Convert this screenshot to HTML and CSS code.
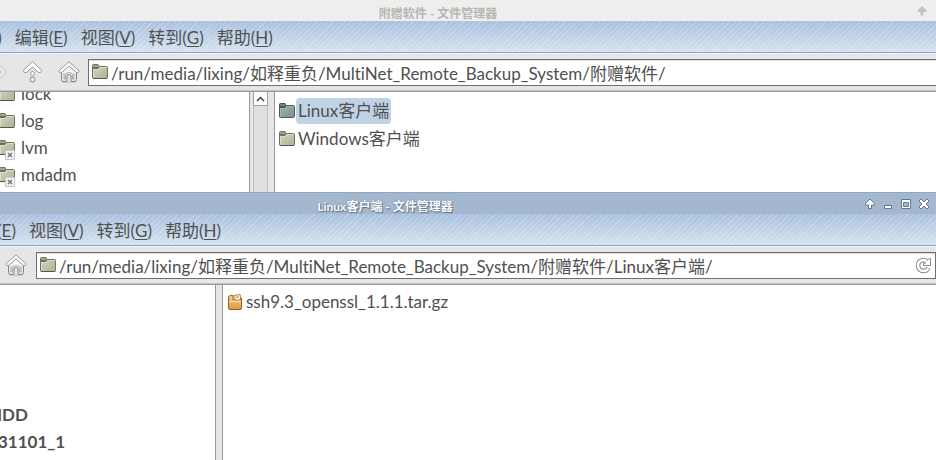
FILE: index.html
```html
<!DOCTYPE html>
<html lang="zh-CN">
<head>
<meta charset="utf-8">
<title>文件管理器</title>
<link rel="stylesheet" href="styles.css">
</head>
<body>
<svg class="defs" aria-hidden="true">
  <defs>
    <linearGradient id="olive" x1="0" y1="0" x2="1" y2="1"><stop offset="0" stop-color="#d3d5c0"/><stop offset="1" stop-color="#adb096"/></linearGradient>
    <linearGradient id="teal" x1="0" y1="0" x2="1" y2="1"><stop offset="0" stop-color="#a0b2b0"/><stop offset="1" stop-color="#7b918f"/></linearGradient>
    <linearGradient id="amber" x1="0" y1="0" x2="0" y2="1"><stop offset="0" stop-color="#f0cf94"/><stop offset="1" stop-color="#d99a42"/></linearGradient>
    <linearGradient id="silver" x1="0" y1="0" x2="0" y2="1"><stop offset="0" stop-color="#ffffff"/><stop offset="1" stop-color="#e2e2e2"/></linearGradient>
    <symbol id="folder" viewBox="0 0 16 16">
      <path d="M.5 13.500V1.500Q.5.500 1.500.5H6L7.500 3.500H.5" fill="#a0a48c" stroke="#6e7258"/>
      <path d="M.5 4.500H6L7.500 2.500H14.500Q15.500 2.500 15.500 3.500V13.500Q15.500 14.500 14.500 14.500H1.500Q.5 14.500.5 13.500Z" fill="url(#olive)" stroke="#6e7258"/>
      <path d="M1.500 13.500V5.500H6.500L8 3.500H14.500" fill="none" stroke="#dcdecb"/>
      <path d="M1 14.500H15" stroke="#55583f"/>
    </symbol>
    <symbol id="folder-teal" viewBox="0 0 16 16">
      <path d="M.5 13.500V1.500Q.5.500 1.500.5H6L7.500 3.500H.5" fill="#6d8482" stroke="#435653"/>
      <path d="M.5 4.500H6L7.500 2.500H14.500Q15.500 2.500 15.500 3.500V13.500Q15.500 14.500 14.500 14.500H1.500Q.5 14.500.5 13.500Z" fill="url(#teal)" stroke="#4a5c59"/>
      <path d="M1.500 13.500V5.500H6.500L8 3.500H14.500" fill="none" stroke="#a2b6b4"/>
    </symbol>
    <symbol id="home" viewBox="0 0 22 22">
      <path d="M3.500 11V18.500Q3.500 20.500 5 20.500H9V15Q9 13.500 11 13.500T13 15V20.500H17Q18.500 20.500 18.500 18.500V11L11 5Z" fill="url(#silver)" stroke="#858585"/>
      <path d="M6 12V18H7.500V14Q8 11.500 11 11.500T14.500 14V18H16V12" fill="none" stroke="#aaa"/>
      <path d="M11 .8L21.200 10Q20.500 12.500 18.500 11.500L11 5L3.500 11.500Q1.500 12.500.8 10Z" fill="#fff" stroke="#979797"/>
      <path d="M4.500 21.500H17.500" stroke="#ccc"/>
    </symbol>
    <symbol id="up" viewBox="0 0 22 22">
      <path d="M10.500.8L19.800 9.500Q19 12.500 16.500 11.500L10.500 6L4.500 11.500Q2 12.500 1.200 9.500Z" fill="#fff" stroke="#979797"/>
      <circle cx="10.500" cy="12.500" r="2" fill="#fff" stroke="#999"/>
      <circle cx="10.500" cy="18.500" r="2.500" fill="#eee" stroke="#858585"/>
    </symbol>
    <symbol id="arrow" viewBox="0 0 12 12">
      <path d="M6 1L10.500 5.500V7H7.500V10.500H4.500V7H1.500V5.500Z"/>
    </symbol>
  </defs>
</svg>

<main class="desktop">
  <section class="window">
    <header class="titlebar idle">
      <h2 class="title">附赠软件 - 文件管理器</h2>
      <div class="controls">
        <button aria-label="卷起"><svg width="12" height="12"><use href="#arrow"/></svg></button>
      </div>
    </header>
    <nav class="menubar">
      <button>文件(<u>F</u>)</button>
      <button>编辑(<u>E</u>)</button>
      <button>视图(<u>V</u>)</button>
      <button>转到(<u>G</u>)</button>
      <button>帮助(<u>H</u>)</button>
    </nav>
    <div class="toolbar">
      <button class="tool forward" aria-label="前进" disabled><svg width="22" height="22" viewBox="0 0 22 22"><path d="M13 3L21 11L13 19" fill="none" stroke="#c6c6c6"/><path d="M11 7L15 11L11 15" fill="none" stroke="#c6c6c6"/></svg></button>
      <button class="tool" aria-label="向上"><svg width="22" height="22"><use href="#up"/></svg></button>
      <button class="tool" aria-label="主目录"><svg width="22" height="22"><use href="#home"/></svg></button>
      <div class="location open-end">
        <svg width="16" height="16"><use href="#folder"/></svg>
        <input type="text" aria-label="位置" value="/run/media/lixing/如释重负/MultiNet_Remote_Backup_System/附赠软件/">
      </div>
    </div>
    <div class="content">
      <aside class="sidebar">
        <ul class="tree">
          <li><span class="icon"><svg width="16" height="16"><use href="#folder"/></svg></span>lock</li>
          <li><span class="icon"><svg width="16" height="16"><use href="#folder"/></svg></span>log</li>
          <li><span class="icon"><svg width="16" height="16"><use href="#folder"/></svg><svg class="emblem" width="10" height="10"><path d="M.5.5H9.500V9.500H.5Z" fill="#f2f2f2" stroke="#c6c6c6"/><path d="M3 3L7 7M7 3L3 7" stroke="#777" stroke-width="1.500"/></svg></span>lvm</li>
          <li><span class="icon"><svg width="16" height="16"><use href="#folder"/></svg><svg class="emblem" width="10" height="10"><path d="M.5.5H9.500V9.500H.5Z" fill="#f2f2f2" stroke="#c6c6c6"/><path d="M3 3L7 7M7 3L3 7" stroke="#777" stroke-width="1.500"/></svg></span>mdadm</li>
        </ul>
      </aside>
      <div class="scrollbar">
        <button aria-label="向上滚动"><svg width="9" height="6" viewBox="0 0 9 6"><path d="M1 5L4.500 1.500L8 5" fill="none" stroke="#444" stroke-width="1.500"/></svg></button>
      </div>
      <ul class="files">
        <li><svg width="16" height="16"><use href="#folder-teal"/></svg><span class="name selected">Linux客户端</span></li>
        <li><svg width="16" height="16"><use href="#folder"/></svg><span class="name">Windows客户端</span></li>
      </ul>
    </div>
  </section>

  <section class="window shifted">
    <header class="titlebar active">
      <h2 class="title">Linux客户端 - 文件管理器</h2>
      <div class="controls">
        <button aria-label="卷起"><svg width="12" height="12"><use href="#arrow"/></svg></button>
        <button aria-label="最小化"><svg width="12" height="12"><path d="M2.500 7.500H9.500V10.500H2.500Z"/></svg></button>
        <button aria-label="最大化"><svg width="12" height="12"><path d="M1.500 1.500H10.500V10.500H1.500ZM3.500 4.500V8.500H8.500V4.500Z" fill-rule="evenodd"/></svg></button>
        <button aria-label="关闭"><svg width="12" height="12"><path d="M1 3L3 1L6 4L9 1L11 3L8 6L11 9L9 11L6 8L3 11L1 9L4 6Z"/></svg></button>
      </div>
    </header>
    <nav class="menubar">
      <button>编辑(<u>E</u>)</button>
      <button>视图(<u>V</u>)</button>
      <button>转到(<u>G</u>)</button>
      <button>帮助(<u>H</u>)</button>
    </nav>
    <div class="toolbar">
      <button class="tool" aria-label="主目录"><svg width="22" height="22"><use href="#home"/></svg></button>
      <div class="location">
        <svg width="16" height="16"><use href="#folder"/></svg>
        <input type="text" aria-label="位置" value="/run/media/lixing/如释重负/MultiNet_Remote_Backup_System/附赠软件/Linux客户端/">
        <button class="reload" aria-label="重新载入"><svg width="17" height="17" viewBox="0 0 17 17"><path d="M12.500 5.500Q11 3 8.500 3Q3 3.500 3 8.500Q3.500 14 8.500 14Q12 14 13.500 11" fill="none" stroke="#8c8c8c" stroke-width="4.500"/><path d="M8.500 8.500H15.500V1.500H14L12.500 3.500L11 6H8.500Z" fill="#fff" stroke="#8c8c8c"/><path d="M12.500 5.500Q11 3 8.500 3Q3 3.500 3 8.500Q3.500 14 8.500 14Q12 14 13.300 11.500" fill="none" stroke="#fff" stroke-width="2.500"/></svg></button>
      </div>
    </div>
    <div class="content">
      <aside class="sidebar">
        <ul class="places">
          <li>HDD</li>
          <li>31101_1</li>
        </ul>
      </aside>
      <ul class="files">
        <li><svg width="16" height="16" viewBox="0 0 16 16"><path d="M1.500 3.500Q1.500 1.500 3.500 1.500H6V5.500H13.500V3.500Q14.500 3.500 14.500 5V14Q14.500 15.500 13 15.500H3Q1.500 15.500 1.500 14Z" fill="url(#amber)" stroke="#a0600f"/><path d="M2.500 7.500H13.500" stroke="#f8e2b8"/><path d="M7 1.500L13 .5L14 4L11.500 6.500L7 5.500Z" fill="#fff3d6" stroke="#b98540"/><path d="M8.500 3.500L12 2.500" stroke="#b98540"/></svg><span class="name">ssh9.3_openssl_1.1.1.tar.gz</span></li>
      </ul>
    </div>
  </section>
</main>
</body>
</html>
```
FILE: styles.css
```css
* {
  box-sizing: border-box;
}

body {
  margin: 0;
  background: #fff;
  color: #505050;
  font-family: Lato, "Noto Sans CJK SC", sans-serif;
  font-size: 17px;
  font-variant-ligatures: none;
  line-height: 24px;
}

ul {
  margin: 0;
  padding: 0;
  list-style: none;
}

button {
  flex: none;
  padding: 0;
  border: 0;
  background: none;
  color: inherit;
  font: inherit;
  white-space: nowrap;
}

svg {
  display: block;
  flex: none;
}

.defs {
  position: absolute;
  width: 0;
  height: 0;
}

.desktop {
  display: grid;
  grid-template-rows: 192px 1fr;
  height: 100vh;
  overflow: hidden;
}

.window {
  display: flex;
  flex-direction: column;
  min-width: 0;
  min-height: 0;
  overflow: hidden;
}

/* Title bar */
.titlebar {
  display: flex;
  align-items: center;
  height: 21px;
  flex: none;
  padding-right: 6px;
}

.title {
  flex: 1;
  margin: 0;
  padding-top: 7px;
  font-size: 12px;
  line-height: 16px;
  font-weight: 700;
  text-align: center;
}

.controls {
  display: flex;
  gap: 6px;
}

.idle {
  background: #eee;
  color: #b8b5ae;
  padding-right: 8px;
}

.idle .title {
  padding-right: 40px;
}

.idle svg {
  fill: #c2c2c2;
}

.active {
  height: 22px;
  border-top: 1px solid #92a8bf;
  background: #a3b7ce;
  color: #fff;
  text-shadow: 0 0 1px #4d6682, 1px 1px 1px #5d7590;
}

.active .title {
  padding-right: 94px;
}

.active svg {
  fill: #fff;
  stroke: #66798f;
  overflow: visible;
}

/* Menu bar */
.menubar {
  display: flex;
  align-items: center;
  gap: 13px;
  height: 32px;
  flex: none;
  padding-top: 3px;
  margin-left: -51px;
  border-bottom: 1px solid #86a6c8;
  background:
    repeating-linear-gradient(135deg, rgba(255, 255, 255, 0.2) 0 1px, transparent 1px 4px),
    linear-gradient(#a9c1de, #d6e3f0);
}

.shifted .menubar {
  margin-left: -37px;
}

.menubar u {
  text-underline-offset: 2px;
}

/* Toolbar */
.toolbar {
  display: flex;
  align-items: center;
  height: 38px;
  flex: none;
  border-top: 1px solid #f6f6f6;
  border-bottom: 1px solid #c4c4c4;
  background: #e6e6e6;
}

.tool {
  margin-right: 14px;
}

.forward {
  margin-left: -14px;
}

.shifted .tool {
  margin-left: 5px;
  margin-right: 9px;
}

.tool + .location {
  margin-left: -6px;
}

.shifted .tool + .location {
  margin-left: 0;
}

.location {
  display: flex;
  flex: 1;
  align-items: center;
  gap: 3px;
  min-width: 0;
  height: 27px;
  padding: 0 3px;
  border: 1px solid #6f6f6f;
  background: #fff;
  box-shadow: inset 0 1px #dcdcdc;
}

.open-end {
  border-right: 0;
}

.location input {
  flex: 1;
  min-width: 0;
  height: 25px;
  padding: 0;
  border: 0;
  outline: 0;
  background: none;
  color: inherit;
  font: inherit;
  font-variant-ligatures: none;
}

/* Panes */
.content {
  display: flex;
  flex: 1;
  min-height: 0;
  border-top: 1px solid #999;
  background: #e6e6e6;
}

.sidebar {
  width: 250px;
  flex: none;
  overflow: hidden;
  border-right: 1px solid #999;
  background: #fff;
}

.shifted .sidebar {
  width: 216px;
}

.tree {
  margin-top: -12px;
}

.tree li {
  display: flex;
  align-items: center;
  gap: 6px;
  height: 27px;
  margin-left: -1px;
}

.icon {
  position: relative;
}

.emblem {
  position: absolute;
  right: 0;
  bottom: -4px;
}

.places {
  padding-top: 116px;
  font-weight: 700;
}

.places li {
  height: 27px;
  margin-left: -11px;
  line-height: 27px;
}

.places li + li {
  margin-left: -2px;
}

.scrollbar {
  width: 15px;
  flex: none;
  margin-left: 3px;
  border: 1px solid #c2c2c2;
  border-width: 0 1px;
  background: #dfdfdf;
}

.scrollbar button {
  display: grid;
  place-items: center;
  width: 15px;
  height: 14px;
  margin-left: -1px;
  border: 1px solid #a3a3a3;
  border-top: 0;
  background: #fbfbfb;
}

.files {
  flex: 1;
  min-width: 0;
  margin-left: 6px;
  padding: 5px 4px;
  border-left: 1px solid #999;
  background: #fff;
}

.files li {
  display: flex;
  align-items: center;
  gap: 1px;
  height: 28px;
}

.shifted .files li {
  height: 24px;
}

.name {
  padding: 1px 2px;
}

.selected {
  border-radius: 4px;
  background: #c0d3e6;
}
```
